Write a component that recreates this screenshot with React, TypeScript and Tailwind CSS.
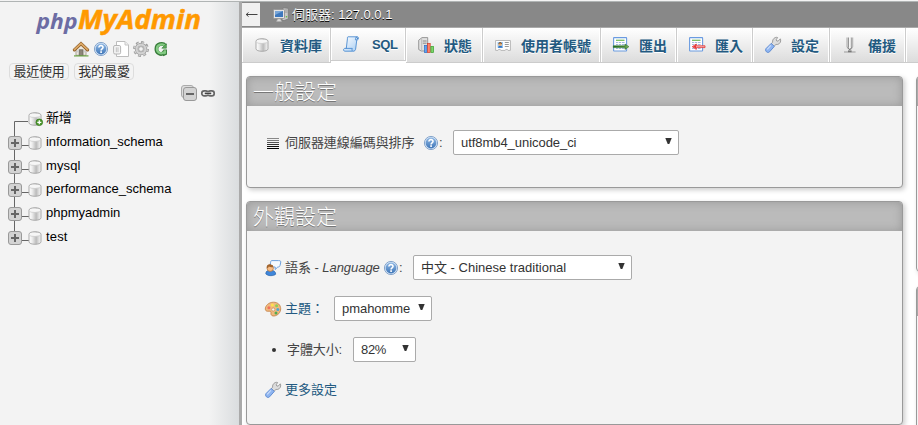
import React from "react";

type P = { className?: string };

const LATIN = "font-['Liberation_Sans','Noto_Sans_CJK_TC',sans-serif]";

function Svg({ children, className = "", w = 16, h = 16 }: { children: React.ReactNode; className?: string; w?: number; h?: number }) {
  return (
    <svg width={w} height={h} viewBox={`0 0 ${w} ${h}`} className={`block shrink-0 overflow-visible ${className}`} fill="none">
      {children}
    </svg>
  );
}

function Gradients() {
  return (
    <svg width="0" height="0" className="absolute">
      <defs>
        <linearGradient id="cyl" x1="0" x2="1" y1="0" y2="0">
          <stop offset="0" stopColor="#fff" />
          <stop offset=".25" stopColor="#eee" />
          <stop offset=".6" stopColor="#bbb" />
          <stop offset=".85" stopColor="#e4e4e4" />
          <stop offset="1" stopColor="#f5f5f5" />
        </linearGradient>
        <linearGradient id="blue" x1="0" x2="0" y1="0" y2="1">
          <stop offset="0" stopColor="#8fb8e4" />
          <stop offset="1" stopColor="#3f76b8" />
        </linearGradient>
        <linearGradient id="scroll" x1="0" x2="1" y1="0" y2="1">
          <stop offset="0" stopColor="#fff" />
          <stop offset="1" stopColor="#a5ccf3" />
        </linearGradient>
        <linearGradient id="greenA" x1="0" x2="1" y1="0" y2="0">
          <stop offset="0" stopColor="#1d6b1d" />
          <stop offset=".7" stopColor="#4a8a35" />
          <stop offset="1" stopColor="#8fc070" />
        </linearGradient>
      </defs>
    </svg>
  );
}

const Cylinder = () => (
  <g>
    <path d="M2 4.2C2 .9 14 .9 14 4.2V11.8C14 15.1 2 15.1 2 11.8Z" fill="url(#cyl)" stroke="#aaa" />
    <ellipse cx="8" cy="4.2" rx="5.1" ry="1.7" fill="#f6f6f6" />
    <path d="M2.8 5.6C4.8 7 11.2 7 13.2 5.6" stroke="#d0d0d0" strokeWidth=".8" />
  </g>
);
const Database = (p: P) => <Svg {...p}><Cylinder /></Svg>;

const Home = (p: P) => (
  <Svg {...p}>
    <path d="M3 7.5L8 3L13 7.5V14.3H3Z" fill="#eee9df" stroke="#9a9187" strokeWidth=".8" />
    <path d="M1.4 8.9L8 2.7L14.6 8.9" stroke="#8b5a22" strokeWidth="3.2" strokeLinecap="round" />
    <path d="M1.5 8.6L8 2.5L14.5 8.6" stroke="#dba766" strokeWidth="1.8" strokeLinecap="round" />
    <rect x="6.2" y="8.8" width="3.8" height="5.7" fill="#8d8578" stroke="#6d6a62" strokeWidth=".8" />
    <path d="M1 14.9H15.5" stroke="#69a343" strokeWidth="1.2" />
    <path d="M4 9.5h1.4v2H4zM11 9.5h1.3v2H11z" fill="#c8cbd0" />
  </Svg>
);

const Help = (p: P) => (
  <Svg {...p}>
    <circle cx="8" cy="8" r="6.6" fill="#d5e4f5" stroke="#7c9dc6" strokeWidth=".9" />
    <circle cx="8" cy="8" r="5.4" fill="url(#blue)" />
    <path d="M5.9 6.5C5.9 3.8 10.2 4 10 6.5C9.9 8 8.1 7.9 8.1 9.5" stroke="#fff" strokeWidth="1.6" />
    <rect x="7.2" y="10.3" width="1.8" height="1.6" fill="#fff" />
  </Svg>
);

const Docs = (p: P) => (
  <Svg {...p}>
    <path d="M3.5.5H12L15.5 4V15.5H3.5Z" fill="#fff" stroke="#bdbdbd" />
    <path d="M12 .5V4H15.5" fill="#eee" stroke="#c6c6c6" />
    <rect x=".6" y="4.5" width="7" height="8.5" rx="1.4" fill="#f4f4f4" stroke="#b4b4b4" />
    <path d="M3.3 6.3V11.2M5 6.3V11.2" stroke="#c0c0c0" />
  </Svg>
);

const Gear = (p: P) => (
  <Svg {...p}>
    <circle cx="8" cy="8" r="6.6" stroke="#9a9a9a" strokeWidth="2.6" strokeDasharray="2.8 2.38" />
    <circle cx="8" cy="8" r="4.5" stroke="#999" strokeWidth="3.4" />
    <circle cx="8" cy="8" r="4.4" stroke="#d2d2d2" strokeWidth="2.2" />
    <circle cx="8" cy="8" r="6.4" stroke="#cdcdcd" strokeWidth="1.6" strokeDasharray="1.8 3.226" strokeDashoffset="-.4" />
    <circle cx="8" cy="8" r="2.4" fill="#f3f3f3" stroke="#999" strokeWidth=".8" />
  </Svg>
);

const Reload = (p: P) => (
  <Svg {...p}>
    <path d="M12.3 4.6C9.8 1.6 3.4 2.6 3.4 7.9C3.4 12.3 8 14.2 10.2 12.2" stroke="#397c3b" strokeWidth="3.8" />
    <path d="M8 11.9L10.6 8.4H14V13.6L10.4 15.2Z" fill="#397c3b" />
    <path d="M12.2 4.8C10 2.4 4 3 3.9 7.8C3.9 11.6 7.8 13.2 10.2 11.8" stroke="#83cb83" strokeWidth="2.2" />
    <path d="M10.9 9.3H13.1V12.6L10.8 13.6L9.6 12Z" fill="#83cb83" />
    <path d="M13.4 2.8V7.2H8.8Z" fill="#5baa5b" stroke="#397c3b" strokeWidth=".6" />
  </Svg>
);

const Collapse = (p: P) => (
  <Svg {...p}>
    <rect x=".5" y=".5" width="12" height="12" rx="2.5" fill="#ddd" stroke="#aaa" />
    <rect x="2.5" y="2.5" width="13" height="13" rx="2.5" fill="#d3d3d3" stroke="#999" />
    <path d="M5 9H13" stroke="#666" strokeWidth="2" />
  </Svg>
);

const Link = (p: P) => (
  <Svg {...p}>
    <rect x="1.8" y="5.9" width="6.2" height="5" rx="2.4" stroke="#666" strokeWidth="1.7" />
    <rect x="8" y="5.9" width="6.2" height="5" rx="2.4" stroke="#666" strokeWidth="1.7" />
    <path d="M4.8 8.4H11.2" stroke="#bbb" strokeWidth="2.6" />
    <path d="M4.8 8.4H11.2" stroke="#444" strokeWidth="1.2" />
  </Svg>
);

const Server = (p: P) => (
  <Svg {...p}>
    <path d="M10 .8L15.3 1.3V12L11 13.5H9Z" fill="#c9c9c9" stroke="#777" strokeWidth=".8" />
    <path d="M12 3H14.5M12 5H14.5" stroke="#8a8a8a" strokeWidth=".8" />
    <circle cx="13.5" cy="9.7" r=".8" fill="#5cc13c" />
    <rect x=".5" y="2.5" width="11" height="9" rx=".8" fill="#e4e4e4" stroke="#999" />
    <rect x="2" y="4" width="8" height="6" fill="#3e78bd" />
    <path d="M2 4H10L2 8Z" fill="#79a6d8" />
    <path d="M4.8 12H7.3L8.6 14.4H3.5Z" fill="#ddd" stroke="#aaa" strokeWidth=".6" />
  </Svg>
);

const Sql = (p: P) => (
  <Svg {...p}>
    <path d="M5 .8H14.2C16.2 .8 15.8 4.3 13.8 3.8L12.6 13.3C12.2 15.6 9.6 15.2 9.6 15.2H2C-.2 15.2 .2 12 2.4 12.4H3.3L4.4 3C4.5 1.8 4.2 1 5 .8Z" fill="url(#scroll)" stroke="#4b8bd0" strokeWidth=".9" />
    <path d="M2.4 12.4H9.3C8.8 13.4 9 14.8 9.6 15.2M13.8 3.8H12.4C12.5 2 13 .8 14.2 .8" stroke="#4b8bd0" strokeWidth=".9" />
    <path d="M13.6 1.7L15 2.6" stroke="#2c6bb4" />
  </Svg>
);

const Status = (p: P) => (
  <Svg {...p}>
    <path d="M.7 3.2L4 .6H9.7V11.8L7.8 14H3.2L.7 12.5Z" fill="#e1e1e1" stroke="#8f8f8f" strokeWidth=".9" />
    <path d="M3.7 1.5V13.5" stroke="#bbb" />
    <path d="M4.8 4H8.6M4.8 6.2H8.6" stroke="#888" />
    <rect x="6.5" y="8.5" width="2.6" height="7" fill="#63a5ef" stroke="#2c6bc0" strokeWidth=".7" />
    <rect x="9.6" y="6.5" width="2.6" height="9" fill="#ff8369" stroke="#d23b2b" strokeWidth=".7" />
    <rect x="12.9" y="9.5" width="2.6" height="6" fill="#7dd46c" stroke="#36a02b" strokeWidth=".7" />
  </Svg>
);

const Users = (p: P) => (
  <Svg {...p}>
    <path d="M.6 3.5H15.4V13.4H13L12.4 12.4H10.8L10.2 13.4H5.8L5.2 12.4H3.6L3 13.4H.6Z" fill="#fff" stroke="#b8b8b8" />
    <rect x="2.5" y="5" width="5.5" height="5.8" fill="#9bc9f4" />
    <path d="M3 10.8C3 8 7.5 8 7.5 10.8Z" fill="#2b71c5" />
    <circle cx="5.2" cy="7.3" r="1.8" fill="#e4ad72" />
    <path d="M3.4 7C3.4 4.7 7 4.7 7 7L5.2 6.3Z" fill="#70431c" />
    <path d="M9.8 5.5H13.8M9.8 7.5H13.8M9.8 9.5H13.8" stroke="#999" />
  </Svg>
);

const Sheet = () => (
  <g>
    <rect x=".6" y=".6" width="13" height="13.4" rx=".5" fill="#fff" stroke="#6a9be0" strokeWidth="1.1" />
    <path d="M3 3.3H11.5" stroke="#79bf60" strokeWidth="1.3" />
    <path d="M3 5.5H11.6M3 7.5H11.6M3 11.5H11.6" stroke="#a2b9dd" />
    <path d="M5.4 5V12M8.5 5V12" stroke="#fff" strokeWidth=".8" />
  </g>
);
const Export = (p: P) => (
  <Svg {...p}>
    <Sheet />
    <path d="M.3 8.8H12V7L15.9 9.7L12 12.4V10.6H.3Z" fill="url(#greenA)" stroke="#2e722c" strokeWidth=".6" />
  </Svg>
);
const Import = (p: P) => (
  <Svg {...p}>
    <Sheet />
    <path d="M16 8.8H7.3V7L3.2 9.7L7.3 12.4V10.6H16Z" fill="#f8b5b1" stroke="#e43434" strokeWidth=".8" />
    <path d="M4 9.7L7 7.8V11.6Z" fill="#e53838" />
  </Svg>
);

const Wrench = (p: P) => (
  <Svg {...p}>
    <path d="M7.6 5.2C7.2 2 10.2-.4 12.6.5L11.2 2.8L11.9 4.1L13.3 4L15.3 1.8C16.7 4.7 14.2 8.1 11 7.4L8.8 9.5L6 6.9Z" fill="#ddd" stroke="#8c8c8c" strokeWidth=".8" />
    <path d="M6.2 6.4L9.3 9.4L4.6 14.8C2.5 16.7-.6 13.9 1 11.6Z" fill="#8fb5f0" stroke="#5685cf" strokeWidth=".9" />
    <path d="M5.8 8.4L2.2 12.4" stroke="#c8dcfb" strokeWidth="1.3" />
  </Svg>
);

const Replication = (p: P) => (
  <Svg {...p}>
    <path d="M5 .5V9.5L6.6 12.2M10.6 .5V9.5L9 12.2" stroke="#b9b9b9" strokeWidth="1.3" />
    <path d="M6.4.5V10.5M9.2.5V10.5" stroke="#8a8a8a" strokeWidth="1" />
    <path d="M7.8.5V11" stroke="#f5f5f5" strokeWidth="1.4" />
    <path d="M6 10.5L7.8 13L9.6 10.5" stroke="#777" />
    <path d="M2 15H13.6" stroke="#b5b5b5" strokeWidth="1.5" />
    <path d="M6 14.3H9.6" stroke="#777" strokeWidth="1.8" />
  </Svg>
);

const Lines = (p: P) => (
  <Svg {...p}>
    <path d="M2 3.5H14" stroke="#888" />
    <path d="M2 5.5H14" stroke="#777" />
    <path d="M2 7.5H14" stroke="#555" />
    <path d="M2 9.5H14" stroke="#333" />
    <path d="M2 11.5H14" stroke="#111" />
    <path d="M2 13.5H14" stroke="#000" />
  </Svg>
);

const Language = (p: P) => (
  <Svg {...p}>
    <path d="M7 .6H13.5C16 .6 16 1.5 15.6 3L15 5.5C14.7 6.8 14 7 12.8 7L10.2 9.5V7H7.5C5.5 7 5 6.2 5.2 5L5.6 2.3C5.8 1 6 .6 7 .6Z" fill="#f5faff" stroke="#6d9fdc" strokeWidth="1" />
    <path d="M.8 13.9C.8 10.7 3 10.2 5.7 10.2C8.8 10.2 10.7 11.7 10.7 14.2C8.5 16.2 3 16.2 .8 13.9Z" fill="#3f86da" stroke="#2762a8" strokeWidth=".7" />
    <circle cx="5.2" cy="8.2" r="3.2" fill="#f6bc86" stroke="#a5642a" strokeWidth=".6" />
    <path d="M1.8 8.3C1 4.8 4.2 3.6 6.2 4.7C8.2 4.9 8.4 6.3 7.6 7.3C5.7 7.3 4.5 6.6 3.8 6.5C3.5 7.6 2.7 7.9 1.8 8.3Z" fill="#a0632c" />
  </Svg>
);

const Palette = (p: P) => (
  <Svg {...p}>
    <path d="M8.5 1.2C3.8 1.2.2 4.6.3 8.2C.5 10.3 2.4 10.4 4 10.2C6 10 6.1 11 5.9 12.2C5.7 14.2 7.4 15.2 9 15C12.9 14.6 15.7 11.4 15.7 7.8C15.7 4 12.8 1.2 8.5 1.2Z" fill="#f0b97f" stroke="#c07c40" strokeWidth=".8" />
    <circle cx="3.9" cy="6.8" r="1.5" fill="#f3705a" />
    <circle cx="7.4" cy="4" r="1.5" fill="#ffe14d" />
    <circle cx="11.6" cy="4.7" r="1.5" fill="#8fd052" />
    <circle cx="12.8" cy="8.4" r="1.5" fill="#4fa7d0" />
    <circle cx="11" cy="11.9" r="1.5" fill="#54aa52" />
    <circle cx="8.2" cy="8.5" r="1.6" fill="#f3f3f3" stroke="#c1864e" strokeWidth=".6" />
  </Svg>
);

function TreeRow({ label, size, tracking = "", isNew, last }: { label: string; size: string; tracking?: string; isNew?: boolean; last?: boolean }) {
  return (
    <div className={`flex items-center ${size}`}>
      <Svg w={46} h={24}>
        {isNew ? (
          <>
            <path d="M14.5 26V14.5H28" stroke="#666" />
            <g transform="translate(27 4)"><Cylinder /></g>
            <circle cx="39.3" cy="15.3" r="3.3" fill="#4e9a2e" stroke="#397b20" strokeWidth=".8" />
            <path d="M37.3 15.3H41.3M39.3 13.3V17.3" stroke="#fff" strokeWidth="1.3" />
          </>
        ) : (
          <>
            <path d={last ? "M14.5 -2V12" : "M14.5 -2V26"} stroke="#666" />
            <path d="M21 14.5H29" stroke="#666" />
            <rect x="8.5" y="5.5" width="13" height="13" rx="2.5" fill="#d3d3d3" stroke="#999" />
            <path d="M11 12H19M15 8V16" stroke="#666" strokeWidth="2" />
            <g transform="translate(27 4)"><Cylinder /></g>
          </>
        )}
      </Svg>
      <span className={`relative -top-px whitespace-nowrap text-[13px] leading-4 text-black ${tracking}`}>{label}</span>
    </div>
  );
}

function Sidebar() {
  return (
    <aside className="flex h-[425px] w-[242px] shrink-0 flex-col border-r-[3px] border-[#aaa] bg-[linear-gradient(to_right,#f3f3f3_0,#f3f3f3_209px,#dadddf_239px)]">
      <div className="-mr-[3px] h-[2px] border-b border-[#b0b4b4] bg-[#f3f3f3]" />
      <div className="h-[37px]">
        <svg width="239" height="37" viewBox="0 2 239 37" className="block overflow-visible italic">
          <text x="36.5" y="29" fontSize="22" fontWeight="700" fill="#6c6ca3" fontFamily="Open Sans, sans-serif" textLength="41" lengthAdjust="spacingAndGlyphs">php</text>
          <text x="78" y="29" fontSize="27.5" fontWeight="700" fill="#f90" stroke="#f90" strokeWidth=".5" fontFamily="Open Sans, sans-serif" textLength="123" lengthAdjust="spacingAndGlyphs">MyAdmin</text>
        </svg>
      </div>
      <div className="flex h-[24px] gap-1 pl-[73px] pt-[2px]">
        <Home /><Help /><Docs /><Gear /><Reload />
      </div>
      <div className="flex gap-[5px] pl-[9px] text-[13px] leading-[15px] text-[#333]">
        <span className="h-[17px] w-[60px] rounded border border-[#ddd] bg-[#f3f3f3] text-center whitespace-nowrap tracking-[-0.2px]">最近使用</span>
        <span className="h-[17px] w-[60px] rounded border border-[#ddd] bg-[#f3f3f3] text-center whitespace-nowrap tracking-[-0.1px]">我的最愛</span>
      </div>
      <div className="flex h-[27px] gap-[3px] pl-[181px] pt-[5px]"><Collapse /><Link /></div>
      <nav>
        <TreeRow label="新增" size="h-6" tracking="tracking-[-0.3px]" isNew />
        <TreeRow label="information_schema" size="h-6" tracking="tracking-[-0.02px]" />
        <TreeRow label="mysql" size="h-[23px]" tracking="tracking-[0.1px]" />
        <TreeRow label="performance_schema" size="h-6" tracking="tracking-[-0.02px]" />
        <TreeRow label="phpmyadmin" size="h-6" tracking="tracking-[-0.02px]" />
        <TreeRow label="test" size="h-[23px]" tracking="tracking-[0.15px]" last />
      </nav>
    </aside>
  );
}

function Tab({ icon, label, width, active }: { icon?: React.ReactNode; label?: string; width: string; active?: boolean }) {
  return (
    <div className={`flex shrink-0 items-center gap-[10px] border-r border-[#ccc] pl-[12px] shadow-[inset_-1px_0_#fff,inset_1px_0_#fff] ${width} ${active ? "h-[33px] border-b bg-[linear-gradient(#fff,#e5e5e5)]" : "h-[35px] border-b bg-[linear-gradient(#fff,#dcdcdc)]"}`}>
      {icon}
      <span className={`relative whitespace-nowrap font-bold leading-4 text-[#235a81] [text-shadow:0_1px_0_#fff] ${active ? "left-[3px] top-px text-[13px] tracking-[-0.4px]" : "top-px text-[14px]"}`}>{label}</span>
    </div>
  );
}

function Select({ value, width, tracking = "" }: { value: string; width: string; tracking?: string }) {
  return (
    <div className={`flex h-[25px] shrink-0 items-center justify-between rounded-[2px] border border-[#aaa] bg-white pl-[7px] pr-[6px] text-[13px] leading-4 text-[#333] ${width}`}>
      <span className={`whitespace-nowrap ${tracking}`}>{value}</span>
      <svg width="7" height="6" viewBox="0 0 7 6" className="mb-[3px] shrink-0"><path d="M.3 0H6.7L4.3 6H2.7Z" fill="#333" /></svg>
    </div>
  );
}

function Panel({ title, size, children }: { title?: string; size: string; children?: React.ReactNode }) {
  return (
    <section className={`shrink-0 overflow-hidden rounded border border-[#999] bg-[#f3f3f3] shadow-[2px_2px_5px_#ccc] ${size}`}>
      <h2 className="h-[29px] whitespace-nowrap bg-[#bbb] pl-[6px] text-[21px] font-light leading-[29px] text-white shadow-[inset_0_0_10px_#999] [text-shadow:0_1px_0_#777]">{title}</h2>
      {children}
    </section>
  );
}

export default function App() {
  return (
    <div className={`h-[425px] w-[918px] overflow-hidden bg-white ${LATIN}`}>
      <Gradients />
      <div className="flex h-[425px]">
        <Sidebar />
        <main className="w-[676px] shrink-0 overflow-hidden">
          <div className="h-[2px] border-b border-[#b0b4b4] bg-[#f3f3f3]" />
          <div className="flex h-[26px] items-center border-b border-b-[#aaa] bg-[#888]">
            <div className="flex h-[23px] w-[18px] items-center justify-center bg-[#f0f0f0]">
              <svg width="13" height="9" viewBox="0 0 13 9" fill="none"><path d="M1 4.5H12.5M3.5 2.5L1.2 4.5L3.5 6.5" stroke="#444" /></svg>
            </div>
            <Server className="ml-[13px]" />
            <span className="ml-[3px] whitespace-nowrap text-[13px] leading-4 text-white [text-shadow:0_1px_0_#000]">伺服器: 127.0.0.1</span>
          </div>
          <div className="flex h-[48px] items-start">
            <Tab width="w-[89px]" icon={<Database />} label="資料庫" />
            <Tab width="w-[75px]" icon={<Sql />} label="SQL" active />
            <Tab width="w-[77px]" icon={<Status />} label="狀態" />
            <Tab width="w-[118px]" icon={<Users />} label="使用者帳號" />
            <Tab width="w-[76px]" icon={<Export />} label="匯出" />
            <Tab width="w-[76px]" icon={<Import />} label="匯入" />
            <Tab width="w-[77px]" icon={<Wrench />} label="設定" />
            <Tab width="w-[76px]" icon={<Replication />} label="備援" />
            <Tab width="w-[76px]" />
          </div>
          <div className="flex items-start gap-[13px] pl-1 text-[13px] leading-4 text-[#444]">
            <div className="flex flex-col gap-[13px]">
              <Panel title="一般設定" size="h-[112px] w-[657px]">
                <div className="mt-6 flex h-[25px] items-center pl-[18px]">
                  <Lines />
                  <span className="ml-1 w-[130px] whitespace-nowrap tracking-[-0.05px]">伺服器連線編碼與排序</span>
                  <Help className="ml-2" />
                  <span className="mr-[11px] w-[3px]">:</span>
                  <Select width="w-[226px]" value="utf8mb4_unicode_ci" tracking="tracking-[-0.05px]" />
                </div>
              </Panel>
              <Panel title="外觀設定" size="h-[224px] w-[657px]">
                <div className="mt-6 flex h-[25px] items-center pl-[18px]">
                  <Language />
                  <span className="ml-1 w-[95px] whitespace-nowrap tracking-[-0.05px]">語系 - <i>Language</i></span>
                  <Help className="ml-[3px]" />
                  <span className="w-[14px]">:</span>
                  <Select width="w-[219px]" value="中文 - Chinese traditional" />
                </div>
                <div className="mt-4 flex h-[25px] items-center pl-[18px]">
                  <Palette />
                  <span className="ml-1 w-[49px] whitespace-nowrap text-[#235a81]">主題：</span>
                  <Select width="w-[98px]" value="pmahomme" tracking="tracking-[-0.05px]" />
                </div>
                <div className="mt-4 flex h-[25px] items-center pl-[25px]">
                  <span className="size-1 rounded-full bg-[#333]" />
                  <span className="ml-[11px] w-[66px] whitespace-nowrap tracking-[-0.1px]">字體大小:</span>
                  <Select width="w-[63px]" value="82%" tracking="tracking-[-0.3px]" />
                </div>
                <div className="mt-[15px] flex h-[25px] items-center pl-[18px]">
                  <Wrench />
                  <span className="ml-1 whitespace-nowrap text-[#235a81]">更多設定</span>
                </div>
              </Panel>
            </div>
            <div className="flex flex-col gap-[14px]">
              <Panel size="h-[196px] w-[120px]" />
              <Panel size="h-[160px] w-[120px]" />
            </div>
          </div>
        </main>
      </div>
    </div>
  );
}
